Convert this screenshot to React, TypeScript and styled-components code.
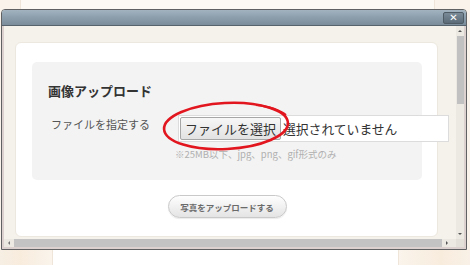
import React from 'react';
import styled, { createGlobalStyle } from 'styled-components';

const GlobalStyle = createGlobalStyle`
  html, body {
    margin: 0;
    padding: 0;
    background: #f9f3eb;
  }
  body {
    font-family: 'Noto Sans CJK JP', 'Noto Sans', sans-serif;
  }
`;

const Page = styled.div`
  position: relative;
  width: 470px;
  height: 265px;
  overflow: hidden;
  display: flex;
  flex-direction: column;
  background: #f9f3eb;
`;

const Strip = styled.div<{ $h: number }>`
  height: ${(p) => p.$h}px;
  flex: none;
  display: flex;
`;

const Side = styled.div<{ $w?: number; $tint?: string }>`
  width: ${(p) => (p.$w ? `${p.$w}px` : 'auto')};
  flex: ${(p) => (p.$w ? 'none' : '1')};
  background: ${(p) => p.$tint || '#f9f3eb'};
`;

const Column = styled.div<{ $w: number; $bg: string }>`
  width: ${(p) => p.$w}px;
  background: ${(p) => p.$bg};
  border-left: 1px solid #efe5d8;
  border-right: 1px solid #efe5d8;
`;

const Dialog = styled.div`
  margin-left: 1px;
  width: 466px;
  height: 241px;
  flex: none;
  box-sizing: border-box;
  border: 1px solid #5f6163;
  border-radius: 4px 4px 0 0;
  display: flex;
  flex-direction: column;
  background: #f4f1ea;
`;

const TitleBar = styled.div`
  height: 15px;
  flex: none;
  border-bottom: 1px solid #56636c;
  border-radius: 3px 3px 0 0;
  background: linear-gradient(to bottom, #a3b3c0 0%, #8ea0ae 45%, #7b8d9b 100%);
  display: flex;
  justify-content: flex-end;
  align-items: flex-start;
  padding-right: 2px;
`;

const CloseButton = styled.div`
  margin-top: 2px;
  width: 19px;
  height: 10px;
  border: 1px solid #4f5c65;
  border-radius: 2px;
  background: linear-gradient(to bottom, #7a8b97, #5b6c78);
  color: #ffffff;
  font-family: 'DejaVu Sans', sans-serif;
  font-weight: bold;
  font-size: 10px;
  line-height: 10px;
  text-align: center;
`;

const Body = styled.div`
  flex: 1;
  display: flex;
  flex-direction: column;
  border-left: 2px solid #dcd1ce;
  border-right: 2px solid #dcd1ce;
  border-bottom: 2px solid #dcd1ce;
  min-height: 0;
`;

const Main = styled.div`
  flex: 1;
  display: flex;
  min-height: 0;
`;

const Viewport = styled.div`
  flex: 1;
  overflow: hidden;
  background: #f5f2eb;
`;

const VScroll = styled.div`
  width: 8px;
  flex: none;
  background: #ece9e3;
  display: flex;
  flex-direction: column;
  align-items: center;
`;

const Arrow = styled.div<{ $dir: 'up' | 'down' | 'left' | 'right' }>`
  width: 0;
  height: 0;
  flex: none;
  ${(p) =>
    p.$dir === 'up'
      ? 'border-left: 2px solid transparent; border-right: 2px solid transparent; border-bottom: 2px solid #555; margin: 4px 0 4px;'
      : p.$dir === 'down'
      ? 'border-left: 2px solid transparent; border-right: 2px solid transparent; border-top: 2px solid #555; margin: 3px 0 4px;'
      : p.$dir === 'left'
      ? 'border-top: 2px solid transparent; border-bottom: 2px solid transparent; border-right: 2px solid #777; margin: 0 4px;'
      : 'border-top: 2px solid transparent; border-bottom: 2px solid transparent; border-left: 2px solid #555; margin: 0 4px;'}
`;

const VThumb = styled.div`
  width: 7px;
  height: 68px;
  background: #c1c1c1;
`;

const Spacer = styled.div`
  flex: 1;
`;

const HScroll = styled.div`
  height: 8px;
  flex: none;
  display: flex;
  align-items: center;
  background: #ece9e3;
`;

const HThumb = styled.div`
  height: 8px;
  width: 428px;
  background: #c3c3c3;
`;

const Corner = styled.div`
  width: 8px;
  height: 8px;
  background: #e3e0da;
  margin-left: auto;
`;

const Card = styled.div`
  margin: 16px 0 0 11px;
  width: 423px;
  height: 195px;
  box-sizing: border-box;
  background: #ffffff;
  border: 1px solid #ede8df;
  border-radius: 6px;
  padding: 19px 0 0 16px;
`;

const Panel = styled.div`
  width: 390px;
  height: 118px;
  box-sizing: border-box;
  background: #f3f3f3;
  border-radius: 5px;
  padding: 20px 0 0 16px;
`;

const PanelTitle = styled.h3`
  margin: 0;
  font-size: 13px;
  line-height: 18px;
  font-weight: bold;
  color: #333333;
`;

const Row = styled.div`
  display: flex;
  align-items: flex-start;
  margin-top: 15px;
  margin-left: 3px;
`;

const Label = styled.div`
  width: 127px;
  flex: none;
  font-size: 11px;
  line-height: 16px;
  margin-top: 1px;
  color: #555555;
`;

const FileField = styled.div`
  display: flex;
  align-items: center;
  width: 271px;
  height: 27px;
  flex: none;
  box-sizing: border-box;
  background: #ffffff;
  border: 1px solid #dcdcdc;
  padding-left: 1px;
`;

const FileButton = styled.div`
  height: 23px;
  box-sizing: border-box;
  padding: 0 4px;
  border: 1px solid #a6a6a6;
  border-radius: 2px;
  background: linear-gradient(to bottom, #f7f7f7, #e2e2e2);
  font-size: 13px;
  line-height: 21px;
  color: #333333;
  white-space: nowrap;
`;

const FileText = styled.span`
  margin-left: 2px;
  font-size: 12.8px;
  color: #333333;
  white-space: nowrap;
`;

const Hint = styled.div`
  margin: 5px 0 0 127px;
  font-size: 9.5px;
  line-height: 14px;
  color: #b0b0b0;
  white-space: nowrap;
`;

const Actions = styled.div`
  display: flex;
  justify-content: center;
  width: 390px;
  margin-top: 15px;
`;

const UploadButton = styled.button`
  width: 119px;
  height: 23px;
  border: 1px solid #c9c9c9;
  border-radius: 12px;
  background: linear-gradient(to bottom, #fefefe, #e4e4e4);
  font-family: 'Noto Sans CJK JP', sans-serif;
  font-size: 8.5px;
  font-weight: bold;
  color: #6a6a6a;
  padding: 0;
  box-shadow: 0 1px 1px rgba(0, 0, 0, 0.08);
`;

const Circle = styled.svg`
  position: absolute;
  left: 160px;
  top: 99px;
  pointer-events: none;
`;

export default function App() {
  return (
    <>
      <GlobalStyle />
      <Page>
        <Strip $h={9}>
          <Side $w={20} />
          <Column $w={413} $bg="#fcf8f3" />
          <Side />
        </Strip>
        <Dialog>
          <TitleBar>
            <CloseButton>✕</CloseButton>
          </TitleBar>
          <Body>
            <Main>
              <Viewport>
                <Card>
                  <Panel>
                    <PanelTitle>画像アップロード</PanelTitle>
                    <Row>
                      <Label>ファイルを指定する</Label>
                      <FileField>
                        <FileButton>ファイルを選択</FileButton>
                        <FileText>選択されていません</FileText>
                      </FileField>
                    </Row>
                    <Hint>※25MB以下、jpg、png、gif形式のみ</Hint>
                  </Panel>
                  <Actions>
                    <UploadButton>写真をアップロードする</UploadButton>
                  </Actions>
                </Card>
              </Viewport>
              <VScroll>
                <Arrow $dir="up" />
                <VThumb />
                <Spacer />
                <Arrow $dir="down" />
              </VScroll>
            </Main>
            <HScroll>
              <Arrow $dir="left" />
              <HThumb />
              <Arrow $dir="right" />
              <Corner />
            </HScroll>
          </Body>
        </Dialog>
        <Strip $h={15}>
          <Side $w={52} $tint="linear-gradient(to right, #f7efe4, #f8ecdd 40%, #faf4ec)" />
          <Column $w={345} $bg="#ffffff" />
          <Side $tint="linear-gradient(to right, #faf4ec, #f8ecdd 60%, #f9f1e7)" />
        </Strip>
        <Circle width="132" height="54" viewBox="0 0 132 54">
          <ellipse
            cx="66"
            cy="27"
            rx="62"
            ry="23"
            transform="rotate(-3 66 27)"
            fill="none"
            stroke="#e2161f"
            strokeWidth="2.6"
          />
          <path d="M 96 6 Q 118 9 126 16" fill="none" stroke="#e2161f" strokeWidth="2" />
        </Circle>
      </Page>
    </>
  );
}
